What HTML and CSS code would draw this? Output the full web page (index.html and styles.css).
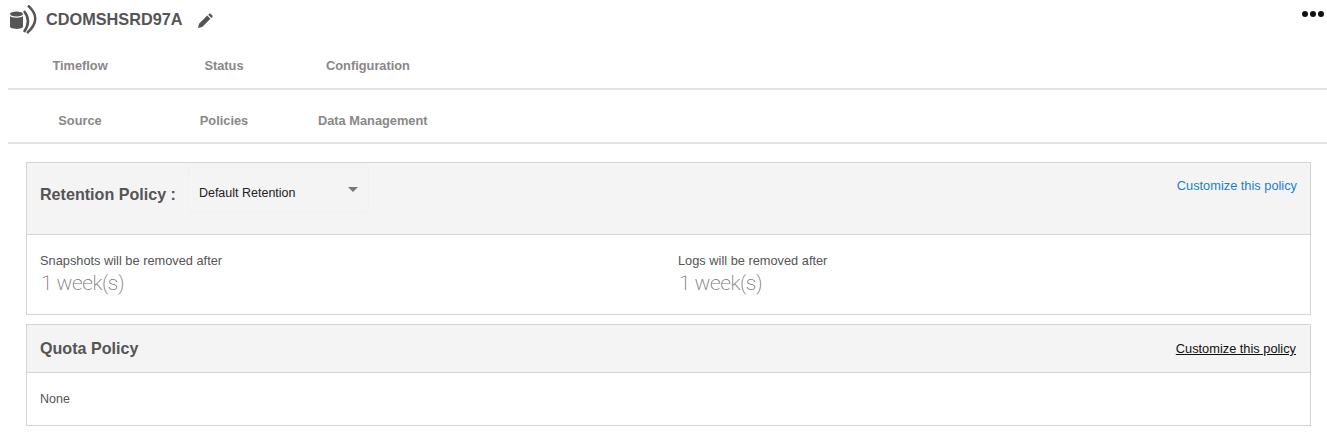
FILE: index.html
```html
<!DOCTYPE html>
<html>
<head>
    <title>CDOMSHSRD97A</title>
    <link rel="stylesheet" href="styles.css">
</head>
<body>

<div class="title-bar">
    <svg class="db-icon" width="30" height="30" viewBox="0 0 30 30">
        <ellipse cx="8.500" cy="9" rx="6.500" ry="2.600" fill="#555"/>
        <path d="M2 11c1 2.200 12 2.200 13 0v10.500c0 3.200-13 3.200-13 0z" fill="#555"/>
        <path d="M16 6Q24 16 16 27" fill="none" stroke="#555" stroke-width="2.500"/>
        <path d="M20 .5Q35 14 19 28" fill="none" stroke="#555" stroke-width="2.500"/>
    </svg>
    <h1>CDOMSHSRD97A</h1>
    <svg class="edit-icon" width="16" height="16" viewBox="0 0 16 16">
        <path d="M1 15l1-4.200 8.200-8.200 3.200 3.200-8.200 8.200z M11.200 1.700l1-1c.4-.4 1-.4 1.400 0l1.800 1.800c.4.4.4 1 0 1.400l-1 1z" fill="#555"/>
    </svg>
    <div class="more"><span></span><span></span><span></span></div>
</div>

<nav class="tabs">
    <a class="tab">Timeflow</a>
    <a class="tab">Status</a>
    <a class="tab">Configuration</a>
</nav>
<nav class="tabs second">
    <a class="tab">Source</a>
    <a class="tab">Policies</a>
    <a class="tab">Data Management</a>
</nav>

<div class="content">
    <section class="panel">
        <div class="panel-head retention">
            <h2>Retention Policy :</h2>
            <div class="select">
                <span>Default Retention</span>
                <i class="caret"></i>
            </div>
            <a class="customize">Customize this policy</a>
        </div>
        <div class="panel-body columns">
            <div class="col">
                <div class="label">Snapshots will be removed after</div>
                <div class="value">1 week(s)</div>
            </div>
            <div class="col">
                <div class="label">Logs will be removed after</div>
                <div class="value">1 week(s)</div>
            </div>
        </div>
    </section>

    <section class="panel">
        <div class="panel-head quota">
            <h2>Quota Policy</h2>
            <a class="customize dark">Customize this policy</a>
        </div>
        <div class="panel-body none">None</div>
    </section>
</div>

</body>
</html>
```

FILE: styles.css
```css
body, html {
    margin: 0;
    padding: 0;
    font-family: "Liberation Sans", Arial, sans-serif;
    font-size: 13px;
    color: #333;
    background-color: white;
}

.title-bar {
    display: flex;
    align-items: center;
    height: 39px;
    padding-left: 8px;
}

.db-icon {
    margin-right: 8px;
}

h1 {
    margin: 0;
    font-size: 16.300px;
    font-weight: bold;
    color: #555;
}

.edit-icon {
    margin: 2px 0 0 14px;
}

.more {
    display: flex;
    gap: 2px;
    margin-left: auto;
    margin-right: 3px;
    margin-bottom: 11px;
}

.more span {
    width: 6px;
    height: 6px;
    border-radius: 50%;
    background-color: #111;
}

.tabs {
    display: flex;
    height: 49px;
    margin-left: 8px;
    border-bottom: 2px solid #e3e3e3;
}

.tabs.second {
    height: 52px;
}

.tab {
    min-width: 100px;
    flex: 0 0 auto;
    padding: 0 22px;
    line-height: 54px;
    text-align: center;
    font-size: 12.800px;
    font-weight: bold;
    color: #888;
}

.second .tab {
    line-height: 62px;
}

.content {
    padding: 18px 16px 0 26px;
}

.panel {
    border: 1px solid #d4d4d4;
    margin-bottom: 9px;
}

.panel-head {
    display: flex;
    background-color: #f4f4f4;
    border-bottom: 1px solid #d4d4d4;
    padding: 0 13px 0 13px;
}

.panel-head.retention {
    height: 71px;
}

.panel-head.quota {
    height: 47px;
    align-items: center;
    padding-right: 14px;
}

h2 {
    margin: 0;
    font-size: 16.100px;
    font-weight: bold;
    color: #555;
}

.retention h2 {
    margin-top: 22px;
}

.select {
    display: flex;
    justify-content: space-between;
    width: 181px;
    height: 46px;
    margin: 4px 0 0 12px;
    padding: 0 10px 0 10px;
    box-sizing: border-box;
    border: 1px solid #f0f0f0;
    border-radius: 4px;
    line-height: 50px;
    font-size: 12.500px;
    color: #222;
}

.caret {
    width: 0;
    height: 0;
    margin-top: 19px;
    border-left: 5px solid transparent;
    border-right: 5px solid transparent;
    border-top: 5px solid #777;
}

.customize {
    margin-left: auto;
    font-size: 12.800px;
    color: #1a7fd4;
}

.retention .customize {
    margin-top: 15px;
}

.customize.dark {
    color: #111;
    text-decoration: underline;
}

.columns {
    display: flex;
    height: 79px;
    padding: 0 13px;
}

.col {
    flex: 0 0 638px;
    padding-top: 18px;
}

.label {
    font-size: 12.800px;
    color: #555;
}

.value {
    margin-left: 1px;
    font-family: Roboto, "Liberation Sans", sans-serif;
    font-weight: 200;
    font-size: 21px;
    letter-spacing: -0.500px;
    line-height: 30px;
    color: #777;
}

.none {
    height: 52px;
    line-height: 52px;
    padding: 0 13px;
    font-size: 12.500px;
    color: #555;
}
```
